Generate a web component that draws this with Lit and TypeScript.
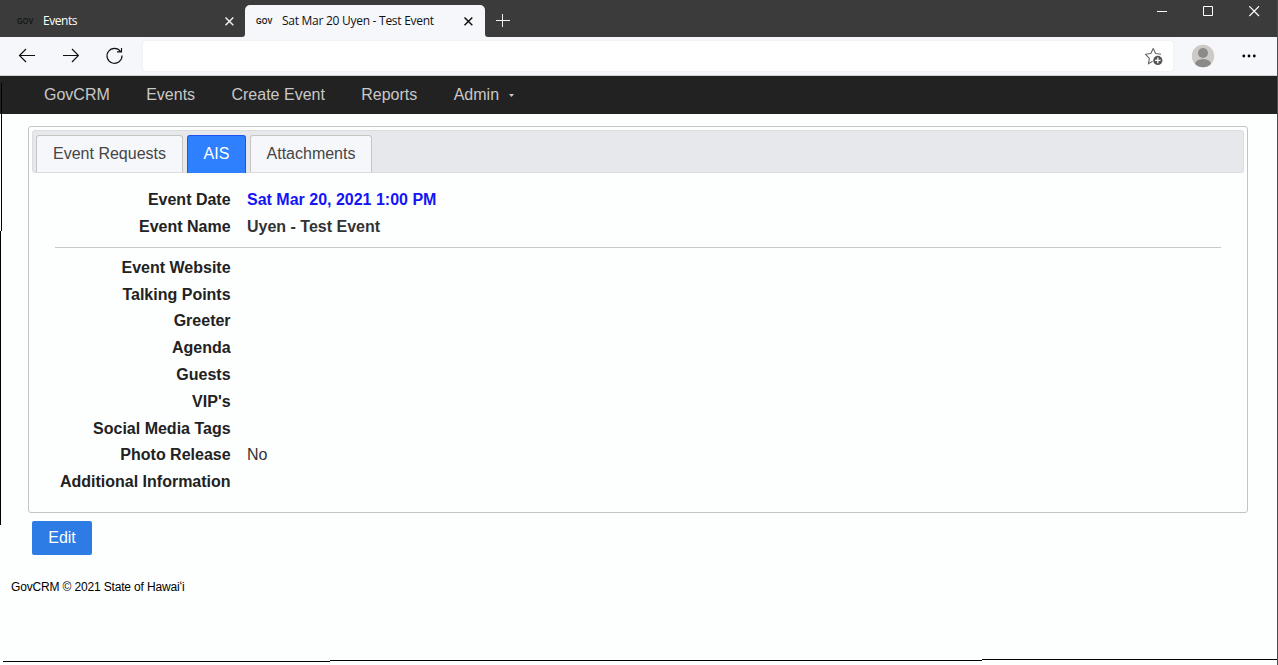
import { LitElement, html, css, svg } from "lit";
import { customElement } from "lit/decorators.js";

@customElement("browser-chrome")
class BrowserChrome extends LitElement {
  static styles = css`
    :host { display: block; font-family: "Open Sans", "Noto Sans", sans-serif; font-size: 12px; }
    svg { display: block; flex: none; }
    .strip { display: flex; height: 37px; background: #3b3b3b; }
    .tab { display: flex; align-items: center; box-sizing: border-box; white-space: nowrap; }
    .tab.idle { width: 245px; padding: 5px 11px 0 17px; color: #fff; background: radial-gradient(circle at calc(100% - 3px) calc(100% - 3px), #3b3b3b 3px, #f6f7fb 3.6px) right bottom / 3px 3px no-repeat; }
    .tab.idle { background: none; }
    .tab.active { width: 240px; margin-top: 5px; padding: 0 12px 0 11px; color: #111; background: #f6f7fb; border-radius: 5px 5px 0 0; }
    .gov { font: bold 9.5px/12px "Liberation Sans", sans-serif; width: 26px; flex: none; color: #171717; }
    .gov span { display: inline-block; transform: scaleX(.77); transform-origin: left; }
    .title { flex: 1; line-height: 16px; }
    .idle .title { letter-spacing: -.45px; }
    .active .title { letter-spacing: -.27px; }
    .plus { margin: 13px 0 0 11px; }
    .controls { margin-left: auto; display: flex; gap: 35px; padding: 6px 18px 0 0; }
    .bar { display: flex; align-items: center; height: 38px; background: #f6f7fb; border-bottom: 1px solid #ced5cf; }
    .back { margin-left: 18px; }
    .fwd { margin-left: 27px; }
    .reload { margin-left: 26px; }
    .address { display: flex; align-items: center; justify-content: flex-end; box-sizing: border-box; width: 1030px; height: 30px; margin-left: 19px; padding-right: 10px; background: #fff; border-radius: 3px; box-shadow: 0 0 2px #e3e5ea; }
    .avatar { margin-left: 18px; }
    .dots { margin-left: 27px; }
  `;

  private cross(color: string) {
    return html`<svg width="10" height="10" viewBox="0 0 10 10"><path d="M1.5 1.5 9.3 9.3M9.3 1.5 1.5 9.3" stroke=${color} stroke-width="1.5" fill="none"/></svg>`;
  }

  render() {
    return html`
      <div class="strip">
        <div class="tab idle"><span class="gov"><span>GOV</span></span><span class="title">Events</span>${this.cross("#eee")}</div>
        <div class="tab active"><span class="gov"><span>GOV</span></span><span class="title">Sat Mar 20 Uyen - Test Event</span>${this.cross("#111")}</div>
        <svg class="plus" width="14" height="15" viewBox="0 0 14 15"><path d="M0 7.5H14M6.5 1V14" stroke="#f2f2f2"/></svg>
        <div class="controls">
          <svg width="11" height="11" viewBox="0 0 11 11"><path d="M0 5.5H10" stroke="#fff"/></svg>
          <svg width="11" height="11" viewBox="0 0 11 11"><path d="M.5.5H9.5V9.5H.5Z" stroke="#fff" fill="none"/></svg>
          <svg width="11" height="11" viewBox="0 0 11 11"><path d="M.3.3 10 10M10 .3.3 10" stroke="#fff" stroke-width="1.2"/></svg>
        </div>
      </div>
      <div class="bar">
        <svg class="back" width="17" height="16" viewBox="0 0 17 16"><path d="M17 7.5H1.5M8 1 1.5 7.5 8 14" stroke="#111" stroke-width="1.2" fill="none"/></svg>
        <svg class="fwd" width="17" height="16" viewBox="0 0 17 16"><path d="M1 7.5H16.5M10 1 16.5 7.5 10 14" stroke="#111" stroke-width="1.2" fill="none"/></svg>
        <svg class="reload" width="19" height="18" viewBox="0 0 19 18"><path d="M15.6 4.5A7.5 7.5 0 1 0 17 8.6M16.5 1V4.9H12" stroke="#111" stroke-width="1.15" fill="none"/></svg>
        <div class="address">
          <svg width="19" height="19" viewBox="0 0 19 19">
            <path d="M8.5 14.2 4.4 16.9 5.4 11.4 1.5 7.3 6.8 6.5 9.2 1.6 11.6 6.5 17 7.3" stroke="#666" stroke-width="1.1" fill="none" stroke-linejoin="round"/>
            <circle cx="13.8" cy="13.4" r="4.6" fill="#555"/><path d="M11 13.4H16.6M13.8 10.6V16.2" stroke="#fff" stroke-width="1.3"/>
          </svg>
        </div>
        <svg class="avatar" width="24" height="24" viewBox="0 0 24 24">
          <defs><clipPath id="face"><circle cx="12" cy="12" r="11.2"/></clipPath></defs>
          <circle cx="12" cy="12" r="11.2" fill="#ccc9c7"/>
          <g clip-path="url(#face)"><circle cx="12" cy="9" r="5" fill="#8c8a89"/><ellipse cx="12" cy="20.3" rx="8.1" ry="5.2" fill="#8c8a89"/></g>
        </svg>
        <svg class="dots" width="15" height="4" viewBox="0 0 15 4"><circle cx="1.8" cy="2" r="1.4"/><circle cx="7" cy="2" r="1.4"/><circle cx="12.3" cy="2" r="1.4"/></svg>
      </div>`;
  }
}

const DETAILS: [string, string][] = [
  ["Event Website", ""],
  ["Talking Points", ""],
  ["Greeter", ""],
  ["Agenda", ""],
  ["Guests", ""],
  ["VIP's", ""],
  ["Social Media Tags", ""],
  ["Photo Release", "No"],
  ["Additional Information", ""],
];

@customElement("app-root")
class AppRoot extends LitElement {
  static styles = css`
    :host { display: block; position: relative; width: 1278px; height: 665px; overflow: hidden; background: #fdfefe; font-family: "Liberation Sans", Arial, sans-serif; font-size: 16px; color: #222; }
    .nav { display: flex; gap: 36.4px; height: 38px; padding-left: 44px; background: #222; color: #c8c8c8; line-height: 37px; }
    .admin { display: flex; align-items: center; gap: 10px; height: 37px; }
    .caret { width: 5px; height: 3px; background: #c8c8c8; clip-path: polygon(0 0, 100% 0, 50% 100%); margin-top: 2px; }
    .panel { box-sizing: border-box; width: 1220px; height: 387px; margin: 12px 0 0 28px; padding: 3px; border: 1px solid #c3c5c5; border-radius: 3px; }
    .tabs { box-sizing: border-box; display: flex; align-items: flex-start; height: 43px; padding: 4px 3px 0; border: 1px solid #dadce0; border-radius: 3px; background: #e7e8ec; }
    .tab { box-sizing: border-box; height: 37px; border: 1px solid #c5c5c5; border-bottom: 0; border-radius: 3px 3px 0 0; background: #f6f7fb; color: #454545; line-height: 36px; text-align: center; white-space: nowrap; }
    .requests { width: 147px; }
    .ais { width: 59px; height: 38px; margin-left: 4px; background: #2f80ff; border-color: #1f50f0; color: #fff; }
    .attach { width: 122px; margin-left: 4px; }
    .body { padding: 14px 23px 0; }
    .row { display: grid; grid-template-columns: 175.6px 1fr; column-gap: 16.4px; height: 26.8px; line-height: 26.8px; }
    .label { font-weight: bold; text-align: right; }
    .value { color: #333; }
    .strong { font-weight: bold; }
    .date { color: #1414f5; }
    .rule { height: 1px; margin: 6px 0 7.3px; background: #c5c9c9; }
    .edit { display: block; width: 60px; height: 34px; margin: 8px 0 0 32px; padding: 0; border: 0; border-radius: 2px; background: #2d7be5; color: #fff; font: inherit; line-height: 34px; }
    .footer { margin: 25px 0 0 11px; font-size: 12px; line-height: 14px; letter-spacing: -.16px; color: #000; }
    .edges { position: absolute; inset: 0; pointer-events: none; }
  `;

  render() {
    return html`
      <browser-chrome></browser-chrome>
      <nav class="nav">
        <span>GovCRM</span><span>Events</span><span>Create Event</span><span>Reports</span>
        <span class="admin">Admin<i class="caret"></i></span>
      </nav>
      <section class="panel">
        <div class="tabs">
          <div class="tab requests">Event Requests</div>
          <div class="tab ais">AIS</div>
          <div class="tab attach">Attachments</div>
        </div>
        <div class="body">
          <div class="row"><span class="label">Event Date</span><span class="value strong date">Sat Mar 20, 2021 1:00 PM</span></div>
          <div class="row"><span class="label">Event Name</span><span class="value strong">Uyen - Test Event</span></div>
          <div class="rule"></div>
          ${DETAILS.map(([label, value]) => html`<div class="row"><span class="label">${label}</span><span class="value">${value}</span></div>`)}
        </div>
      </section>
      <button class="edit">Edit</button>
      <div class="footer">GovCRM © 2021 State of Hawaiʻi</div>
      <svg class="edges" width="1278" height="665" shape-rendering="crispEdges">
        ${svg`<path d="M1 83h1v148h-1zM0 231h1v294h-1zM3 661h327v1h-327zM330 660h652v1h-652zM982 659h296v1h-296z" fill="#000"/><path d="M1277 0h1v665h-1z" fill="#4a4d4d"/>`}
        <path d="M245 34v3h-3q3 0 3-3zM485 34v3h3q-3 0-3-3z" fill="#f6f7fb" shape-rendering="auto"/>
      </svg>`;
  }
}
